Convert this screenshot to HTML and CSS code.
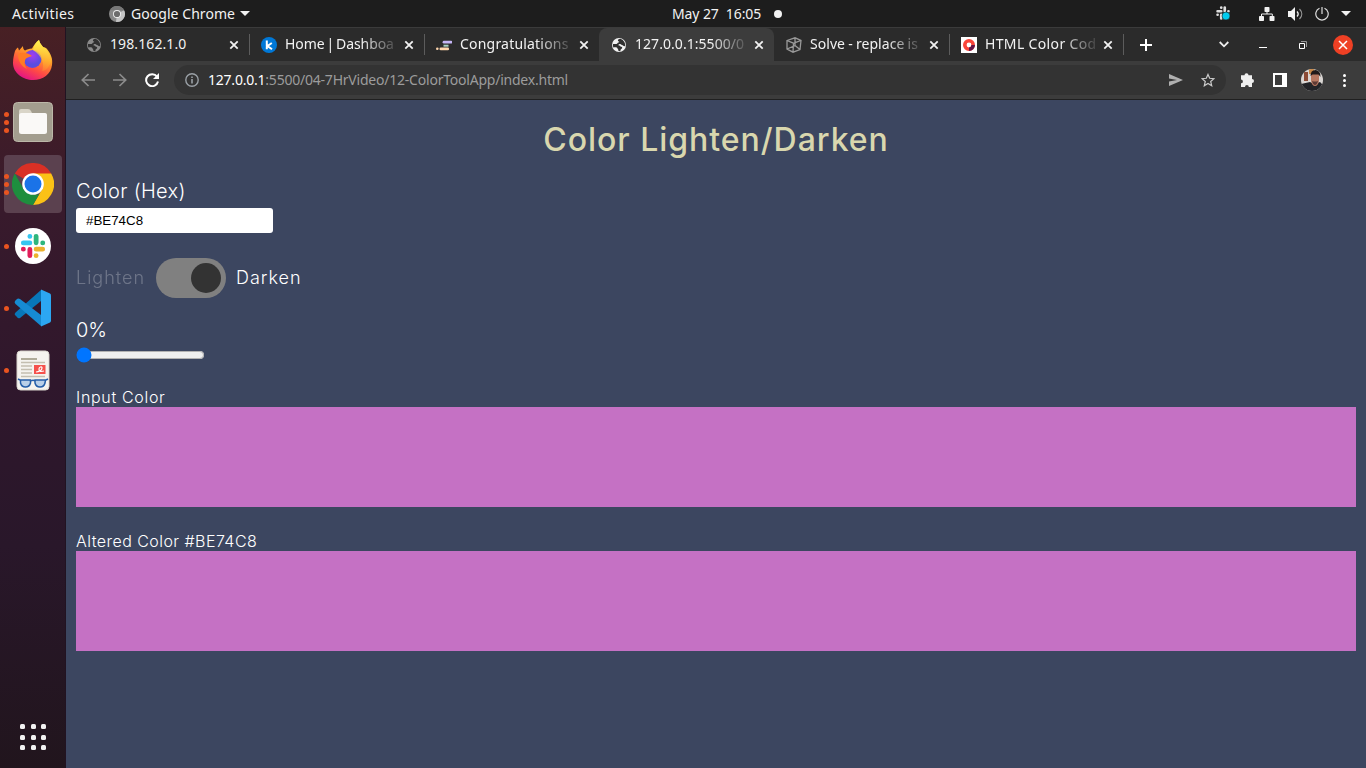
FILE: index.html
```html
<!DOCTYPE html>
<html lang="en">
<head>
<meta charset="utf-8">
<title>Color Lighten/Darken</title>
<link rel="stylesheet" href="styles.css">
</head>
<body>
<svg class="defs" width="0" height="0">
  <defs>
    <linearGradient id="ff" x1=".8" y1="0" x2=".3" y2="1"><stop offset="0" stop-color="#fff14a"/><stop offset=".4" stop-color="#ff9a28"/><stop offset=".7" stop-color="#ff4a45"/><stop offset="1" stop-color="#e0108a"/></linearGradient>
    <linearGradient id="ffy" x1="0" y1="0" x2="0" y2="1"><stop offset="0" stop-color="#fff44f"/><stop offset="1" stop-color="#ffa52a" stop-opacity=".3"/></linearGradient>
    <radialGradient id="ffp" cx=".5" cy=".3"><stop offset="0" stop-color="#a33cf0"/><stop offset="1" stop-color="#5a4de0"/></radialGradient>
    <symbol id="x" viewBox="0 0 10 10"><path d="M1.3 1.3l7.4 7.4M8.7 1.3L1.3 8.7" stroke="currentColor" stroke-width="1.8" fill="none"/></symbol>
    <symbol id="globe" viewBox="0 0 16 16"><circle cx="8" cy="8" r="7" fill="currentColor"/><path class="land" d="M9.2 1.8C7.4 1.9 6.7 2.9 7 4.2c1.6-.3 1.5 1 .4 1.3-1.1.2-.8 1.4-2 1.4L2.1 7c-.4 1.2-.2 2.4.3 3.4 2.1-.4 3.7-.3 4 .9.2.9 1.1.9 1.1 2.8l1.7.2c.5-1.1.2-2 1.4-2.6 1-.5.7-1.7-.3-1.9-1.3-.2-1.5-1.8-3.1-1.5C7.7 7 9.6 6.6 10.4 7.7c.8.7 1.7.3 2.1 1.3l1.7.3c.4-3-1.6-6.7-5-7.5z"/></symbol>
    <symbol id="slack" viewBox="0 0 24 24"><g fill="none" stroke-width="4.6" stroke-linecap="round"><path class="s-g" d="M15 2.7v6.2M21.3 9h.1"/><path class="s-b" d="M9 9H2.7M9 2.7v.1"/><path class="s-r" d="M9 15.2v6.1M2.7 15h.1"/><path class="s-y" d="M15 15h6.3M15 21.2v.1"/></g></symbol>
  </defs>
</svg>
<div class="desktop">
  <header class="topbar">
    <span class="activities">Activities</span>
    <span class="appmenu">
      <svg width="16" height="16" viewBox="0 0 16 16"><circle cx="8" cy="8" r="8" fill="#888"/><path d="M8 8L15 4.2A8 8 0 0 1 7 15.9z" fill="#c4c4c4"/><path d="M1 4.2A8 8 0 0 1 15 4.2H8z" fill="#777"/><circle cx="8" cy="8" r="4" fill="#eee"/><circle cx="8" cy="8" r="3.1" fill="#6c6c6c"/></svg>
      <span class="appname">Google Chrome</span>
      <i class="caret"></i>
    </span>
    <span class="clock">May 27&nbsp; 16:05<i class="dot"></i></span>
    <span class="tray">
      <svg class="t-slack" width="15" height="15" viewBox="0 0 15 15"><use href="#slack" width="14" height="14"/><circle cx="10" cy="10" r="4" fill="#00cbef" stroke="#1d1d1d" stroke-width=".6"/></svg>
      <svg class="t-net" width="16" height="14" viewBox="0 0 16 14" fill="#f2f2f2"><rect x="5.5" y="0" width="5" height="5" rx=".8"/><rect x="0" y="9" width="5" height="5" rx=".8"/><rect x="10.5" y="9" width="5" height="5" rx=".8"/><path d="M8 4v3M2.5 10V7h10.8v3" fill="none" stroke="#f2f2f2"/></svg>
      <svg class="t-vol" width="16" height="14" viewBox="0 0 16 14"><path d="M0 4h3l4-4v14l-4-4H0z" fill="#f2f2f2"/><path d="M9 4.5c1.5 1.5 1.5 3.500 0 5" stroke="#f2f2f2" stroke-width="1.4" fill="none"/><path d="M11.500 2c3 3 3 7 0 10" stroke="#999" stroke-width="1.200" fill="none"/></svg>
      <svg class="t-pow" width="14" height="14" viewBox="0 0 14 14" fill="none" stroke="#ddd" stroke-width="1.200"><path d="M4.500 1.200a6.200 6.200 0 1 0 5 0M7 0v7"/></svg>
      <i class="caret"></i>
    </span>
  </header>
  <div class="workspace">
    <nav class="dock">
      <div class="app"><svg width="42" height="42" viewBox="0 0 42 42"><path d="M3 12c1-2 2-3 3-3.500l1 3L11 7c0 2 .5 4 2 4.500 2-1 4-2 7-2C22 6 24 3 27 1c1 4 3 5 4 7 2 0 3 1 4 2 4 5 6 10 5 16-1 9-9 15-19 15S1 34 1 24c0-5 1-8 2-12z" fill="url(#ff)"/><circle cx="20.500" cy="20" r="9" fill="url(#ffp)"/><path d="M6 15c4-2 9-2 14 2-3 1-7 2-7 5-1 3 0 5 2 8-6-3-9-8-9-15z" fill="#ff7b24"/><path d="M27 1c1 4 3 5 4 7 5 3 8 9 8 15-2 5-5 9-9 9 3-7 0-15-9-21 1-5 3-8 6-10z" fill="url(#ffy)"/></svg></div>
      <div class="app run3"><i></i><svg width="40" height="40" viewBox="0 0 40 40"><rect x=".5" y=".5" width="39" height="39" rx="4" fill="#a39e8f" stroke="#bcb8a9"/><path d="M6 29V9q0-2 2-2h7q2 0 3 2l1 2h13q2 0 2 2v16z" fill="#d9d5c8"/><rect x="6" y="11" width="28" height="21" rx="2.500" fill="#faf9f7"/></svg></div>
      <div class="app run3 current"><i></i><svg width="42" height="42" viewBox="0 0 42 42"><path d="M21 21L2.800 10.500A21 21 0 0 1 39.200 10.500z" fill="#d93025"/><path d="M21 10.500h18.200A21 21 0 0 1 21 42l9.100-15.700z" fill="#fbc116"/><path d="M2.800 10.500l9.100 15.700L21 31.500h6L21 42A21 21 0 0 1 2.800 10.500z" fill="#1e8e3e"/><circle cx="21" cy="21" r="10.800" fill="#fff"/><circle cx="21" cy="21" r="8.500" fill="#1a73e8"/></svg></div>
      <div class="app run1"><i></i><svg width="36" height="36" viewBox="0 0 36 36"><circle cx="18" cy="18" r="18" fill="#fff"/><use href="#slack" x="5.500" y="5.500" width="25" height="25"/></svg></div>
      <div class="app run1"><i></i><svg width="38" height="38" viewBox="0 0 38 38"><path d="M27 1L27 12 6 29Q4 30 3 28L1 26Q0 25 1.500 23.500z" fill="#0877b9"/><path d="M27 37V26L6 10Q4 9 3 10L1 12Q0 13.500 1.500 15z" fill="#168bd2"/><path d="M27 .5L36 4.500q1 .5 1 2v25q0 1.500-1 2L27 37.500z" fill="#2ca7f2"/></svg></div>
      <div class="app run1"><i></i><svg width="34" height="41" viewBox="0 0 34 41"><rect x="1" y="1" width="32" height="39" rx="3.500" fill="#f5f3ef" stroke="#d8d4cc"/><path d="M5 9h16M5 12.500h24M5 16h11M5 19.500h11M5 23h11M5 26.500h24" stroke="#c4beb0" stroke-width="1.500"/><path d="M5 9h16" stroke="#a5a08c" stroke-width="1.500"/><rect x="18" y="15" width="11.500" height="9" fill="#f5514c"/><path d="M20 22c3 0 6-2 6-4s-3-1-3 1 1 3 5 2" fill="none" stroke="#fff" stroke-width="1.200"/><g fill="#b9cfe8" stroke="#245da8" stroke-width="1.500"><path d="M4.500 30h10v3q-1 4-5 4t-5-4zM19 30h10.500l-.5 3q-1 4-5 4t-5-4z"/><path d="M15 31q2-1.500 4 0M4 30l-2-1M30 30l2-1" fill="none"/></g></svg></div>
      <div class="grid"><i></i><i></i><i></i><i></i><i></i><i></i><i></i><i></i><i></i></div>
    </nav>
    <section class="browser">
      <div class="tabs">
        <div class="tab"><svg class="fav dim" width="16" height="16"><use href="#globe"/></svg><span class="t-ip">198.162.1.0</span><svg class="close" width="10" height="10"><use href="#x"/></svg></div>
        <div class="tab"><svg class="fav" width="16" height="16" viewBox="0 0 16 16"><circle cx="8" cy="8" r="8" fill="#0078d7"/><path d="M5.800 3.500v8.700M10.800 6L6.500 9l4.500 3.200" fill="none" stroke="#fff" stroke-width="2"/></svg><span class="t-home">Home | Dashboa</span><svg class="close" width="10" height="10"><use href="#x"/></svg></div>
        <div class="tab"><svg class="fav" width="16" height="16" viewBox="0 0 16 16"><path d="M8 5.200h7" stroke="#c5b5f5" stroke-width="2.800" stroke-linecap="round"/><path d="M7.500 8.700h5" stroke="#a9cfc2" stroke-width="2"/><path d="M4.800 11.900h7" stroke="#ffd6ad" stroke-width="2.600" stroke-linecap="round"/><circle cx="1.300" cy="11.800" r="1.300" fill="#ffd6ad"/></svg><span class="t-cong">Congratulations</span><svg class="close" width="10" height="10"><use href="#x"/></svg></div>
        <div class="tab active"><svg class="fav" width="16" height="16"><use href="#globe"/></svg><span class="t-local">127.0.0.1:5500/0</span><svg class="close" width="10" height="10"><use href="#x"/></svg></div>
        <div class="tab"><svg class="fav" width="16" height="16" viewBox="0 0 16 16" fill="none" stroke="#999" stroke-width="1.300"><path d="M1 3.500L9 .8l6 2.700-1 9L7 15.200l-6-3zM1 3.500l6.500 2.700L15 3.500M7.500 6.200L7 15M1 12l8-3.500V1M9 8.500l5 4"/></svg><span class="t-solve">Solve - replace is</span><svg class="close" width="10" height="10"><use href="#x"/></svg></div>
        <div class="tab last"><svg class="fav" width="16" height="16" viewBox="0 0 16 16"><path d="M0 0h16v16H0z" fill="#fff"/><circle cx="8" cy="8" r="4.200" fill="none" stroke="#f9453a" stroke-width="3.600"/><path d="M12.200 8A4.200 4.200 0 0 1 8 12.200" fill="none" stroke="#641447" stroke-width="3.600"/></svg><span class="t-html">HTML Color Cod</span><svg class="close" width="10" height="10"><use href="#x"/></svg></div>
        <svg class="plus" width="12" height="12" viewBox="0 0 12 12"><path d="M6 0v12M0 6h12" stroke="#fff" stroke-width="2"/></svg>
        <div class="winctl">
          <svg class="w-down" width="10" height="7" viewBox="0 0 10 7"><path d="M.7 1L5 5.300 9.300 1" fill="none" stroke="#eee" stroke-width="1.800"/></svg>
          <i class="w-min"></i>
          <svg class="w-max" width="8" height="8" viewBox="0 0 8 8" fill="none"><path d="M2 .5h5.500V6" stroke="#999"/><path d="M.5 2.500h5v5h-5z" stroke="#fff"/></svg>
          <span class="w-close"><svg width="10" height="10" viewBox="0 0 10 10"><path d="M1 1l8 8M9 1L1 9" stroke="#fff" stroke-width="1.500"/></svg></span>
        </div>
      </div>
      <div class="toolbar">
        <svg class="nav" width="14" height="14" viewBox="0 0 14 14"><path d="M14 7H1.500M7.500 1L1.300 7l6.200 6"/></svg>
        <svg class="nav" width="14" height="14" viewBox="0 0 14 14"><path d="M0 7h12.500M6.500 1l6.200 6-6.200 6"/></svg>
        <svg class="nav reload" width="14" height="14" viewBox="0 0 14 14"><path d="M12 3.600A6 6 0 1 0 13 8.500"/><path d="M14 0v6H8z" fill="#fff" stroke="none"/></svg>
        <div class="omnibox">
          <svg width="14" height="14" viewBox="0 0 14 14" fill="none" stroke="#9aa0a6" stroke-width="1.400"><circle cx="7" cy="7" r="6.200"/><path d="M7 6v4.500M7 3.400v1.500" stroke-width="1.600"/></svg>
          <span class="url"><b>127.0.0.1</b>:5500/04-7HrVideo/12-ColorToolApp/index.html</span>
          <svg class="send" width="14" height="12" viewBox="0 0 14 12"><path d="M0 0l14 6-14 6V7.500L8 6 0 4.500z" fill="#b0b0b0"/></svg>
          <svg width="14" height="14" viewBox="0 0 14 14"><path d="M7 1.400l1.700 3.900 4.200.4-3.200 2.800 1 4.200L7 10.500l-3.700 2.200 1-4.200L1.100 5.700l4.200-.4z" fill="none" stroke="#ccc" stroke-width="1.200"/></svg>
        </div>
        <svg class="puzzle" width="16" height="16" viewBox="0 0 16 16"><path d="M1 3.200H4.500a2 2 0 1 1 4 0H12v3.700a2 2 0 1 1 0 4V15H8.800a1.900 1.900 0 1 0-3.800 0H1v-3.700a1.900 1.900 0 1 0 0-3.800z" fill="#f0f0f0"/></svg>
        <svg class="side" width="14" height="14" viewBox="0 0 14 14"><path d="M0 0h14v14H0zM2 2v10h7V2z" fill="#fff" fill-rule="evenodd"/></svg>
        <svg class="avatar" width="22" height="22" viewBox="0 0 22 22"><clipPath id="round"><circle cx="11" cy="11" r="11"/></clipPath><g clip-path="url(#round)"><path d="M0 0h22v22H0z" fill="#d9d5d2"/><path d="M3 3h4v9H3z" fill="#8b4b36"/><path d="M8 0h5v5H8z" fill="#c78645"/><path d="M0 15l9-2 4 2 6-2 3 3v6H0z" fill="#222327"/><path d="M10 5h8v7q-1 5-4 5t-4-5z" fill="#b77861"/><path d="M9.500 7q0-6 5-6t5 7l-2-2.500h-6z" fill="#201a1a"/><path d="M11 12q3 1 6 0-1 4-3 4t-3-4z" fill="#5b3934"/></g></svg>
        <span class="more"><i></i><i></i><i></i></span>
      </div>
      <main class="page">
        <h1>Color Lighten/Darken</h1>
        <label class="hexlabel" for="hex">Color (Hex)</label>
        <input id="hex" class="hex" type="text" value="#BE74C8">
        <div class="toggle-row">
          <span class="lighten">Lighten</span>
          <span class="toggle"><i></i></span>
          <span class="darken">Darken</span>
        </div>
        <div class="percent">0%</div>
        <input class="slider" type="range" min="0" max="100" value="0">
        <div class="caption first">Input Color</div>
        <div class="swatch"></div>
        <div class="caption second">Altered Color #BE74C8</div>
        <div class="swatch"></div>
      </main>
    </section>
  </div>
</div>
</body>
</html>
```
FILE: styles.css
```css
* { box-sizing: border-box; }
body { margin: 0; background: #1d1d1d; font-family: "Noto Sans", sans-serif; color: #f2f2f2; overflow: hidden; }
svg { display: block; flex: none; }
i { display: block; flex: none; }
.defs { position: absolute; }
.desktop { width: 1366px; height: 768px; display: flex; flex-direction: column; }

.topbar { height: 27px; flex: none; display: grid; grid-template-columns: 109px 563px 1fr auto; align-items: center; font-size: 14px; background: #1d1d1d; }
.activities { padding-left: 12px; letter-spacing: .4px; }
.appmenu { display: flex; align-items: center; }
.appname { margin-left: 6px; width: 109px; white-space: nowrap; letter-spacing: .05px; }
.caret { border: 5px solid transparent; border-top: 5px solid #f2f2f2; border-bottom: 0; }
.clock { display: flex; align-items: center; letter-spacing: -.1px; white-space: nowrap; }
.dot { width: 8px; height: 8px; border-radius: 50%; background: #f2f2f2; margin-left: 13px; }
.tray { display: flex; align-items: center; padding-right: 15px; }
.t-slack { --mono: #ddd; }
.t-net { margin-left: 28px; }
.t-vol { margin-left: 13px; }
.t-pow { margin: 0 12px 0 11px; }
.s-g { stroke: var(--mono, #2eb67d); }
.s-b { stroke: var(--mono, #36c5f0); }
.s-r { stroke: var(--mono, #e01e5a); }
.s-y { stroke: var(--mono, #ecb22e); }

.workspace { flex: 1; display: flex; min-height: 0; }
.dock { width: 66px; flex: none; display: flex; flex-direction: column; padding: 4px 4px 0; background: linear-gradient(#482024 0, #381a2c 25%, #2f172c 48%, #29172a 70%, #21151d 100%); border-right: 1px solid #211322; }
.app { width: 58px; height: 58px; margin-bottom: 4px; flex: none; display: flex; align-items: center; justify-content: center; border-radius: 4px; position: relative; }
.app.current { background: #5b414f; }
.app i { position: absolute; left: 0; width: 5px; height: 5px; border-radius: 50%; background: #e95420; }
.run3 i { box-shadow: 0 -8px #e95420, 0 8px #e95420; }
.grid { margin: auto auto 18px 16px; display: grid; grid-template-columns: repeat(3, 5px); gap: 5.500px; }
.grid i { width: 5px; height: 5px; border-radius: 1.500px; background: #f2f2f2; }

.browser { flex: 1; min-width: 0; display: flex; flex-direction: column; }
.tabs { height: 34px; flex: none; display: flex; align-items: center; padding-left: 8px; background: #2b2b2b; border-top: 1px solid #3b3b3b; }
.tab { width: 175px; height: 33px; flex: none; display: flex; align-items: center; padding: 0 10px 0 12px; font-size: 14px; position: relative; }
.tab::after { content: ""; position: absolute; right: -1px; top: 6px; width: 1px; height: 21px; background: #5c5c5c; }
.tab:has(+ .active)::after, .active::after { display: none; }
.tab.last::after { right: 0; }
.tab.last { padding-right: 11px; }
.tab span { width: 112px; margin: -2px 0 0 8px; white-space: nowrap; -webkit-mask-image: linear-gradient(90deg, #000 76px, transparent 116px); }
.tab .t-ip { -webkit-mask-image: none; letter-spacing: .1px; }
.tab .t-home { letter-spacing: -.1px; word-spacing: -1.500px; }
.tab .t-cong { letter-spacing: .2px; }
.tab .t-local { letter-spacing: .05px; }
.tab .t-solve { word-spacing: -.5px; letter-spacing: .05px; }
.tab .t-html { letter-spacing: .35px; }
.close { margin-left: auto; }
.active { background: #3c3c3c; border-radius: 8px 8px 0 0; }
.dim { color: #8a8a8a; }
.land { fill: #303030; }
.plus { margin-left: 16px; }
.winctl { display: flex; align-items: center; margin-left: auto; padding-right: 13px; }
.w-min { width: 8px; height: 1px; background: #fff; margin: 5px 0 0 30px; }
.w-max { margin: 0 26px 0 32px; }
.w-close { width: 20px; height: 20px; border-radius: 50%; background: #ef4024; display: grid; place-items: center; }

.toolbar { height: 39px; flex: none; display: flex; align-items: center; padding-left: 15px; background: #3c3c3c; border-bottom: 1px solid #202020; }
.nav { margin-right: 18px; fill: none; stroke: #8c8c8c; stroke-width: 1.700; }
.reload { margin-right: 15px; stroke: #fff; stroke-width: 2; }
.omnibox { width: 1052px; height: 30px; border-radius: 15px; background: #333; display: flex; align-items: center; padding: 0 11px; }
.url { margin: -2px 0 0 9px; font-size: 14px; color: #9c9c9c; flex: 1; white-space: nowrap; letter-spacing: -.22px; }
.url b { font-weight: 400; color: #fff; }
.send { margin-right: 18px; }
.puzzle { margin-left: 14px; }
.side { margin-left: 17px; }
.avatar { margin-left: 14px; }
.more { margin-left: 20px; display: grid; gap: 2px; }
.more i { width: 3px; height: 3px; border-radius: 50%; background: #fff; }

.page { flex: 1; min-height: 0; background: #3c4660; padding: 0 10px; font-family: Inter, sans-serif; font-weight: 350; display: flex; flex-direction: column; color: #fff; }
h1 { margin: 20px 0 0; height: 40px; line-height: 40px; text-align: center; font-size: 32px; font-weight: 500; letter-spacing: .97px; color: #d9d7ae; }
.hexlabel { margin-top: 19px; height: 24px; line-height: 24px; font-size: 20px; font-weight: 300; letter-spacing: .32px; }
.hex { margin-top: 5px; width: 197px; height: 25px; border: 0; border-radius: 3px; padding: 5px 10px; font: 13.333px "Liberation Sans", Arial, sans-serif; background: #fff; color: #000; }
.toggle-row { margin-top: 25px; height: 40px; display: flex; align-items: center; font-size: 18px; letter-spacing: 1px; }
.toggle-row span:not(.toggle) { padding-bottom: 1px; }
.lighten { width: 80px; opacity: .25; }
.toggle { width: 70px; height: 40px; border-radius: 20px; background: #808080; padding: 5px; display: flex; justify-content: flex-end; }
.toggle i { width: 30px; height: 30px; border-radius: 50%; background: #333; }
.darken { margin-left: 10px; }
.percent { margin-top: 20px; height: 24px; line-height: 24px; font-size: 20px; font-weight: 300; }
.slider { width: 129px; height: 16px; margin: 5px 0 0; }
.caption { height: 20px; line-height: 20px; font-size: 16px; }
.first { margin-top: 24px; letter-spacing: .68px; }
.second { margin-top: 24px; letter-spacing: .45px; }
.swatch { height: 100px; flex: none; background: #c571c4; }
```
